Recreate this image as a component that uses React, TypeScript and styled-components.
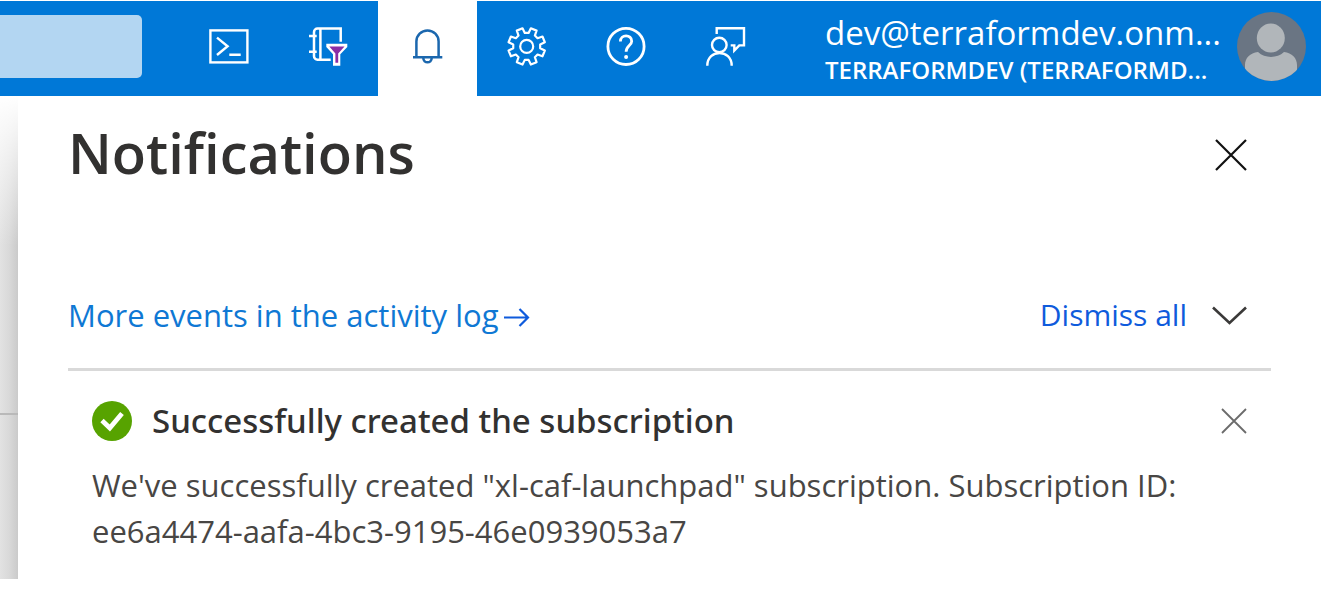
import React from "react";
import styled, { createGlobalStyle } from "styled-components";

const GlobalStyle = createGlobalStyle`
  *, *::before, *::after { box-sizing: border-box; }
  body {
    margin: 0;
    background: #fff;
    font-family: "Open Sans", "Noto Sans", sans-serif;
    color: #323130;
  }
  button {
    border: 0;
    padding: 0;
    background: none;
    font: inherit;
    color: inherit;
    cursor: pointer;
  }
  svg { display: block; flex: none; }
`;

const Page = styled.div`
  padding: 1px 2px 0 0;
`;

const TopBar = styled.header`
  display: flex;
  height: 95px;
  padding-right: 15px;
  background: #0078d7;
  color: #fff;
`;

const SearchBox = styled.input`
  flex: 1;
  min-width: 0;
  height: 63px;
  margin: 14px 38px 0 0;
  padding: 0 16px;
  border: 0;
  border-radius: 0 5px 5px 0;
  background: #b3d6f2;
  font: inherit;
  font-size: 28px;
  color: #323130;
`;

const Tools = styled.nav`
  display: flex;
`;

const ToolButton = styled.button<{ $active?: boolean }>`
  display: flex;
  align-items: center;
  justify-content: center;
  width: 99px;
  padding-bottom: 4px;
  background: ${(p) => (p.$active ? "#fff" : "transparent")};
  color: ${(p) => (p.$active ? "#1b67ae" : "#fff")};
`;

const Account = styled.button`
  display: flex;
  align-items: center;
  gap: 16px;
  margin-left: 51px;
  padding-bottom: 4px;
  text-align: left;
`;

const AccountText = styled.span`
  display: flex;
  flex-direction: column;
  width: 396px;
  padding-top: 4px;
  white-space: nowrap;
`;

const UserName = styled.span`
  font-size: 33px;
  line-height: 42px;
`;

const Tenant = styled.span`
  font-size: 24px;
  font-weight: 600;
  line-height: 32px;
`;

const Body = styled.div`
  display: flex;
`;

const Backdrop = styled.div`
  width: 18px;
  flex: none;
  background: linear-gradient(#fff, rgba(255, 255, 255, 0) 150px),
    linear-gradient(90deg, #e2e2e2, #d9d9d9 50%, #cacaca);
`;

const BackdropRule = styled.div`
  margin-top: 317px;
  border-top: 2px solid #b9b9b9;
`;

const Panel = styled.main`
  flex: 1;
  min-width: 0;
  padding: 22px 50px 25px;
`;

const PanelHead = styled.div`
  display: flex;
  align-items: center;
  justify-content: space-between;
  min-height: 74px;
  padding-right: 24px;
`;

const Title = styled.h1`
  align-self: flex-start;
  margin: 0;
  font-size: 56px;
  font-weight: 600;
  line-height: 68px;
`;

const IconButton = styled.button<{ $tone: string }>`
  display: flex;
  color: ${(p) => p.$tone};
`;

const Actions = styled.div`
  display: flex;
  align-items: center;
  justify-content: space-between;
  margin-top: 103px;
  padding: 0 24px 33px 0;
  border-bottom: 3px solid #d9d9d9;
  font-size: 30px;
  line-height: 40px;
`;

const LogLink = styled.a`
  display: flex;
  align-items: center;
  gap: 6px;
  color: #0f78d4;
  font-size: 31px;
  text-decoration: none;

  svg { margin-top: 4px; }
`;

const DismissGroup = styled.div`
  display: flex;
  align-items: center;
  gap: 25px;
`;

const DismissAll = styled.button`
  color: #0f5bdc;
`;

const Notice = styled.article`
  padding: 28px 24px 0;
`;

const NoticeHead = styled.div`
  display: flex;
  align-items: center;
  gap: 20px;
`;

const NoticeTitle = styled.h2`
  flex: 1;
  margin: 0;
  font-family: "Noto Sans", "Open Sans", sans-serif;
  font-size: 33px;
  font-weight: 500;
  line-height: 44px;
`;

const NoticeText = styled.p`
  margin: 19px 0 0;
  font-size: 31px;
  line-height: 46px;
  color: #484644;
`;

const Glyph = ({ children, w = 2.2 }: { children: React.ReactNode; w?: number }) => (
  <svg width="43" height="43" viewBox="0 0 43 43" fill="none" stroke="currentColor" strokeWidth={w} aria-hidden="true">
    {children}
  </svg>
);

const ShellIcon = () => (
  <Glyph w={2.4}>
    <rect x="2.4" y="5.4" width="37" height="32" />
    <path d="M9 12.6 19.6 21.3 9 30M21.3 29.7H32.7" />
  </Glyph>
);

const DirectoryIcon = () => (
  <Glyph w={2.5}>
    <path d="M33.7 16.7V3.6H10.5A3.5 3.5 0 0 0 7 7.1V31.2A3.5 3.5 0 0 0 10.5 34.7H23.7M13.4 3.6V34.7M2 11H9.7M2 26.7H9.7" />
    <path d="M19.3 18.7H40.3V22L33.3 29.3V40.7H26V29.3L19.3 22Z" fill="#fff" stroke="none" />
    <path d="M22.3 21.6H37.5L31.2 28.4V37.8H28.4V28.4Z" fill="#8a2da5" stroke="none" />
  </Glyph>
);

const BellIcon = () => (
  <Glyph w={2.5}>
    <path d="M10.4 32V16.5A11.1 11.1 0 0 1 32.6 16.5V32M7 32.2H36.3M17.3 33C17.3 38.8 25.7 38.8 25.7 33" />
  </Glyph>
);

const gearOutline = Array.from({ length: 8 }, (_, i) => {
  const at = (deg: number, r: number) => {
    const a = ((i * 45 + deg) * Math.PI) / 180;
    return `${(21.7 + r * Math.sin(a)).toFixed(2)} ${(21.4 - r * Math.cos(a)).toFixed(2)}`;
  };
  return [at(-8, 13.6), at(8, 13.6), at(13, 18.6), at(32, 18.6)].join(" ");
}).join(" ");

const GearIcon = () => (
  <Glyph>
    <polygon points={gearOutline} strokeLinejoin="round" />
    <circle cx="21.7" cy="21.4" r="6.5" />
  </Glyph>
);

const HelpIcon = () => (
  <Glyph w={2.8}>
    <circle cx="22" cy="21.4" r="18.1" />
    <path d="M16.4 16.5C16.4 9 27.7 9 27.7 16.2C27.7 20.5 22.1 20.8 22.1 26.8" />
    <circle cx="22.1" cy="32" r="2" fill="currentColor" stroke="none" />
  </Glyph>
);

const FeedbackIcon = () => (
  <Glyph w={2.4}>
    <circle cx="16.3" cy="20" r="7.3" />
    <path d="M4.3 40.7C4.3 23.7 28.7 23.7 28.7 40.7M13.7 9V3.3H41V20.4H36.3L31.3 25.5V20.4H27.7" />
  </Glyph>
);

const Avatar = () => (
  <svg width="69" height="69" viewBox="0 0 69 69" aria-hidden="true">
    <clipPath id="avatar-disc"><circle cx="34.5" cy="34.5" r="34.5" /></clipPath>
    <g clipPath="url(#avatar-disc)">
      <rect width="69" height="69" fill="#6a7583" />
      <ellipse cx="33.8" cy="26" rx="14" ry="14.6" fill="#b1b6ba" />
      <path d="M8 69V53C8 46 13 41 21 40C28 46.5 40 46.5 47 40C55 41 60 46 60 53V69Z" fill="#b1b6ba" />
    </g>
  </svg>
);

const Cross = ({ size, w }: { size: number; w: number }) => (
  <svg width={size} height={size} viewBox={`0 0 ${size} ${size}`} stroke="currentColor" strokeWidth={w} aria-hidden="true">
    <path d={`M1 1 ${size - 1} ${size - 1}M${size - 1} 1 1 ${size - 1}`} />
  </svg>
);

export default function App() {
  return (
    <Page>
      <GlobalStyle />
      <TopBar>
        <SearchBox type="search" aria-label="Search resources" />
        <Tools aria-label="Portal tools">
          <ToolButton aria-label="Cloud Shell"><ShellIcon /></ToolButton>
          <ToolButton aria-label="Directories and subscriptions"><DirectoryIcon /></ToolButton>
          <ToolButton aria-label="Notifications" $active><BellIcon /></ToolButton>
          <ToolButton aria-label="Settings"><GearIcon /></ToolButton>
          <ToolButton aria-label="Help"><HelpIcon /></ToolButton>
          <ToolButton aria-label="Feedback"><FeedbackIcon /></ToolButton>
        </Tools>
        <Account>
          <AccountText>
            <UserName>dev@terraformdev.onm...</UserName>
            <Tenant>TERRAFORMDEV (TERRAFORMD...</Tenant>
          </AccountText>
          <Avatar />
        </Account>
      </TopBar>
      <Body>
        <Backdrop><BackdropRule /></Backdrop>
        <Panel>
          <PanelHead>
            <Title>Notifications</Title>
            <IconButton aria-label="Close" $tone="#111"><Cross size={32} w={2.2} /></IconButton>
          </PanelHead>
          <Actions>
            <LogLink href="#activity-log">
              More events in the activity log
              <svg width="26" height="20" viewBox="0 0 26 20" fill="none" stroke="#0f5bdc" strokeWidth="2.2" aria-hidden="true">
                <path d="M0 10.5H24M15.5 2 24 10.5 15.5 19" />
              </svg>
            </LogLink>
            <DismissGroup>
              <DismissAll>Dismiss all</DismissAll>
              <IconButton aria-label="More dismiss options" $tone="#3b3a39">
                <svg width="35" height="20" viewBox="0 0 35 20" fill="none" stroke="currentColor" strokeWidth="2.6" aria-hidden="true">
                  <path d="M1 2.5 17.5 18 34 2.5" />
                </svg>
              </IconButton>
            </DismissGroup>
          </Actions>
          <Notice>
            <NoticeHead>
              <svg width="40" height="40" viewBox="0 0 40 40" role="img" aria-label="Success">
                <circle cx="20" cy="20" r="20" fill="#57a300" />
                <path d="M10 19.5 17.8 27 30 12.5" fill="none" stroke="#fff" strokeWidth="4.8" />
              </svg>
              <NoticeTitle>Successfully created the subscription</NoticeTitle>
              <IconButton aria-label="Dismiss" $tone="#6b6b6b"><Cross size={26} w={1.8} /></IconButton>
            </NoticeHead>
            <NoticeText>
              We've successfully created "xl-caf-launchpad" subscription. Subscription ID: ee6a4474-aafa-4bc3-9195-46e0939053a7
            </NoticeText>
          </Notice>
        </Panel>
      </Body>
    </Page>
  );
}
